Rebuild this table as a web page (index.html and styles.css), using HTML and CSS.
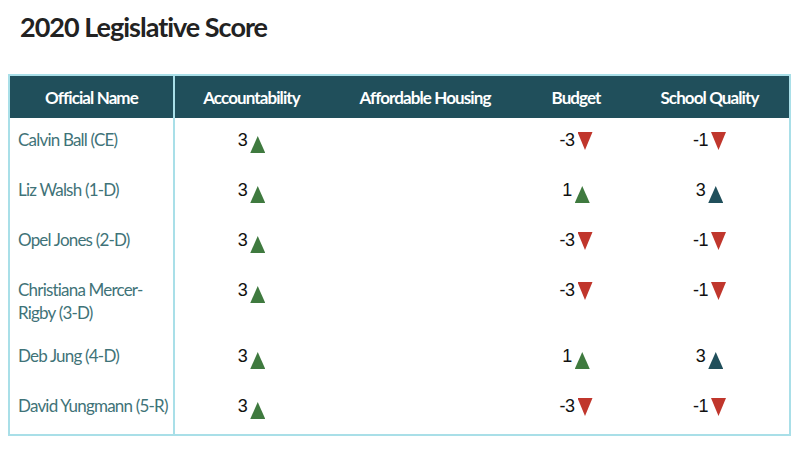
FILE: index.html
```html
<!DOCTYPE html>
<html lang="en">
<head>
<meta charset="utf-8">
<title>2020 Legislative Score</title>
<link rel="stylesheet" href="styles.css">
</head>
<body>
<h1 class="title">2020 Legislative Score</h1>
<table class="score">
  <colgroup>
    <col class="c-name"><col class="c-acc"><col class="c-aff"><col class="c-bud"><col class="c-sch">
  </colgroup>
  <thead>
    <tr>
      <th class="name-h">Official Name</th>
      <th>Accountability</th>
      <th>Affordable Housing</th>
      <th>Budget</th>
      <th>School Quality</th>
    </tr>
  </thead>
  <tbody>
    <tr>
      <td class="name">Calvin Ball (CE)</td>
      <td><span class="val">3</span><span class="up g"></span></td>
      <td></td>
      <td><span class="val">-3</span><span class="down"></span></td>
      <td><span class="val">-1</span><span class="down"></span></td>
    </tr>
    <tr>
      <td class="name">Liz Walsh (1-D)</td>
      <td><span class="val">3</span><span class="up g"></span></td>
      <td></td>
      <td><span class="val">1</span><span class="up g"></span></td>
      <td><span class="val">3</span><span class="up b"></span></td>
    </tr>
    <tr>
      <td class="name">Opel Jones (2-D)</td>
      <td><span class="val">3</span><span class="up g"></span></td>
      <td></td>
      <td><span class="val">-3</span><span class="down"></span></td>
      <td><span class="val">-1</span><span class="down"></span></td>
    </tr>
    <tr class="two">
      <td class="name">Christiana Mercer-<br>Rigby (3-D)</td>
      <td><span class="val">3</span><span class="up g"></span></td>
      <td></td>
      <td><span class="val">-3</span><span class="down"></span></td>
      <td><span class="val">-1</span><span class="down"></span></td>
    </tr>
    <tr>
      <td class="name">Deb Jung (4-D)</td>
      <td><span class="val">3</span><span class="up g"></span></td>
      <td></td>
      <td><span class="val">1</span><span class="up g"></span></td>
      <td><span class="val">3</span><span class="up b"></span></td>
    </tr>
    <tr>
      <td class="name">David Yungmann (5-R)</td>
      <td><span class="val">3</span><span class="up g"></span></td>
      <td></td>
      <td><span class="val">-3</span><span class="down"></span></td>
      <td><span class="val">-1</span><span class="down"></span></td>
    </tr>
  </tbody>
</table>
</body>
</html>
```
FILE: styles.css
```css
html, body {
  margin: 0;
  padding: 0;
  background: #ffffff;
}
body {
  padding: 0 11px 0 8px;
  font-family: Lato, "Open Sans", sans-serif;
}
.title {
  margin: 0;
  padding: 12px 0 0 12px;
  height: 74px;
  box-sizing: border-box;
  font-size: 27px;
  line-height: 30px;
  font-weight: 700;
  color: #222222;
  letter-spacing: -1px;
}
.score {
  width: 781px;
  border-collapse: collapse;
  border: 2px solid #a9dfe8;
  table-layout: fixed;
}
.c-name { width: 165px; }
.c-acc { width: 154px; }
.c-aff { width: 194px; }
.c-bud { width: 108px; }
.c-sch { width: 160px; }
.score th {
  background: #204f5b;
  color: #ffffff;
  font-weight: 700;
  font-size: 17px;
  height: 42px;
  padding: 0;
  text-align: center;
  letter-spacing: -0.9px;
}
.score th.name-h {
  border-right: 2px solid #a9dfe8;
}
.score td {
  vertical-align: top;
  text-align: center;
  padding: 10px 0 16px;
  line-height: 23px;
  height: 23px;
  white-space: nowrap;
}
.score tr.two td {
  padding-bottom: 10px;
}
.score td.name {
  text-align: left;
  padding-left: 8px;
  padding-right: 4px;
  color: #3f7378;
  font-size: 17px;
  letter-spacing: -0.8px;
  border-right: 2px solid #a9dfe8;
}
.val {
  font-family: "Liberation Sans", Arial, sans-serif;
  font-size: 18px;
  color: #111111;
  letter-spacing: -0.5px;
}
.up, .down {
  display: inline-block;
  width: 15px;
  margin-left: 3px;
  vertical-align: top;
}
.up {
  height: 17px;
  margin-top: 8px;
  margin-bottom: -2px;
  background: #3f7a3f;
  clip-path: polygon(50% 0, 100% 100%, 0 100%);
}
.up.b { background: #204f5b; }
.down {
  height: 18px;
  margin-top: 4px;
  background: #c0362c;
  clip-path: polygon(0 0, 100% 0, 50% 100%);
}
```
